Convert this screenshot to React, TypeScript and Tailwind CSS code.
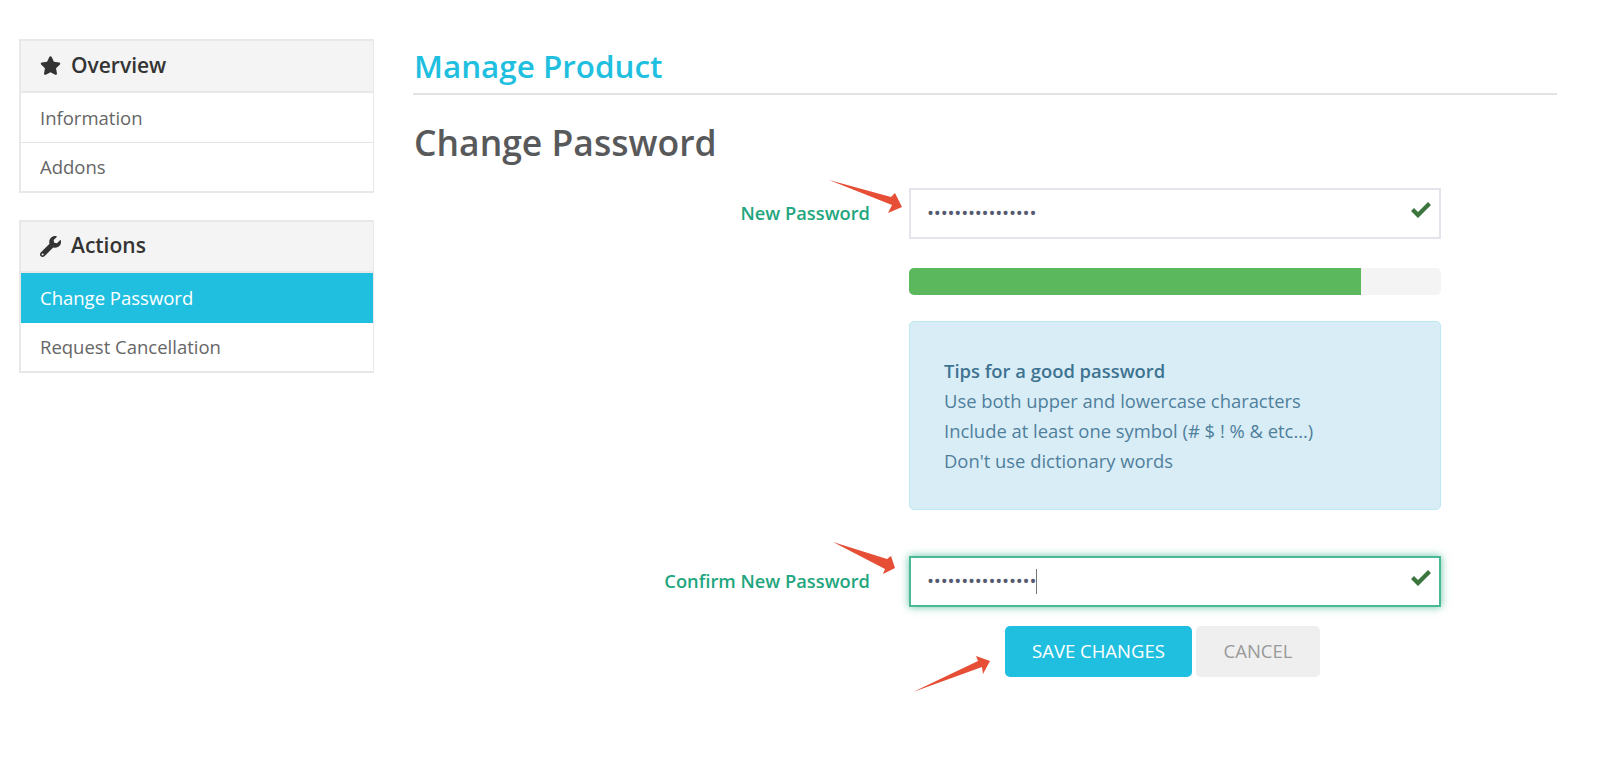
import React from 'react';
import { FaStar, FaWrench } from 'react-icons/fa';

const SidePanel = ({ icon, title, items, active, headerHeight }: { icon: React.ReactNode; title: string; items: { label: string; height: string }[]; active?: string; headerHeight: string }) => (
  <div className="border-2 border-r border-[#e8e8e8] bg-white">
    <div className={'flex items-center gap-[10px] border-b-2 border-[#e8e8e8] bg-[#f4f4f4] pb-px pl-[19px] text-[21px] font-semibold text-[#333] ' + headerHeight}>
      <span className="w-[21px] text-[21px] text-[#333]">{icon}</span>
      {title}
    </div>
    {items.map((item, i) => (
      <div
        key={item.label}
        className={
          'flex items-center pl-[19px] text-[18.5px] ' +
          item.height +
          (item.label === active ? ' bg-[#20bfdf] text-white' : ' text-[#666]') +
          (i > 0 && !active ? ' border-t border-[#e3e3e3]' : '')
        }
      >
        {item.label}
      </div>
    ))}
  </div>
);

const Arrow = ({ className, points }: { className: string; points: string }) => (
  <svg className={'absolute ' + className} width="80" height="60" viewBox="0 0 80 60">
    <polygon points={points} fill="#e64e36" />
  </svg>
);

const PasswordField = ({ label, focused }: { label: string; focused?: boolean }) => (
  <div className="flex items-center gap-[39px]">
    <label className="w-[457px] pb-px text-right text-[18.3px] font-semibold text-[#1fa67e]">{label}</label>
    <div
      className={
        'relative flex h-[51px] w-[532px] items-center bg-white pl-[16px] ' +
        (focused
          ? 'border-2 border-[#4ab795] shadow-[0_0_8px_rgba(40,170,130,0.7)]'
          : 'border-2 border-[#e3e4ec]')
      }
    >
      <span className="text-[18.7px] leading-none tracking-[-0.2px] text-[#555a70]">••••••••••••••••</span>
      {focused && <span className="h-[25px] w-px bg-[#777]" />}
      <svg className="absolute right-[8px] top-[12px]" width="20" height="16" viewBox="0 0 20 16">
        <polygon points="0,9 3,6 7,10 17,0 20,3 7,16" fill="#3c763d" />
      </svg>
    </div>
  </div>
);

export default function App() {
  return (
    <div className="relative flex min-h-[779px] bg-white pl-[19px] pt-[39px] font-['Open_Sans',sans-serif]">
      <aside className="flex w-[355px] flex-col gap-[27px]">
        <SidePanel
          icon={<FaStar />}
          title="Overview"
          headerHeight="h-[52px]"
          items={[
            { label: 'Information', height: 'h-[49px]' },
            { label: 'Addons', height: 'h-[49px]' },
          ]}
        />
        <SidePanel
          icon={<FaWrench />}
          title="Actions"
          headerHeight="h-[51px]"
          items={[
            { label: 'Change Password', height: 'h-[50px]' },
            { label: 'Request Cancellation', height: 'h-[48px]' },
          ]}
          active="Change Password"
        />
      </aside>

      <main className="ml-[39px] w-[1144px]">
        <h1 className="h-[56px] border-b-2 border-[#e3e3e3] pl-px text-[31.4px] font-semibold leading-[54px] text-[#20bfdf]">
          Manage Product
        </h1>
        <h2 className="mt-[24px] pl-px text-[35.5px] font-semibold leading-[46px] text-[#58595b]">Change Password</h2>

        <div className="mt-[23px]">
          <PasswordField label="New Password" />

          <div className="ml-[496px] mt-[29px] h-[27px] w-[532px] overflow-hidden rounded-[5px] bg-[#f4f4f4]">
            <div className="h-full w-[85%] bg-[#5cb85c]" />
          </div>

          <div className="ml-[496px] mt-[26px] h-[189px] w-[532px] rounded-[5px] border border-[#bce8f1] bg-[#d9edf7] pl-[34px] pt-[34px] text-[18.4px] leading-[30px] text-[#4f7f9b]">
            <div className="font-semibold text-[#3d7391]">Tips for a good password</div>
            <div>Use both upper and lowercase characters</div>
            <div>Include at least one symbol (# $ ! % &amp; etc...)</div>
            <div>Don't use dictionary words</div>
          </div>

          <div className="mt-[46px]">
            <PasswordField label="Confirm New Password" focused />
          </div>

          <div className="ml-[592px] mt-[19px] flex gap-1">
            <button className="h-[51px] w-[187px] rounded-[5px] bg-[#20bfdf] pb-px text-[18.5px] text-white">SAVE CHANGES</button>
            <button className="h-[51px] w-[124px] rounded-[5px] bg-[#efefef] pb-px text-[18.5px] text-[#999]">CANCEL</button>
          </div>
        </div>
      </main>

      <Arrow className="left-[829px] top-[180px]" points="0,0 62,17 66,13 73,27 59,33 63,25" />
      <Arrow className="left-[833px] top-[541px]" points="0,1 54,18 58,15 62,27 50,33 52,28" />
      <Arrow className="left-[913px] top-[652px]" points="0,40 65,9 63,4 77,9 70,22 69,15" />
    </div>
  );
}
